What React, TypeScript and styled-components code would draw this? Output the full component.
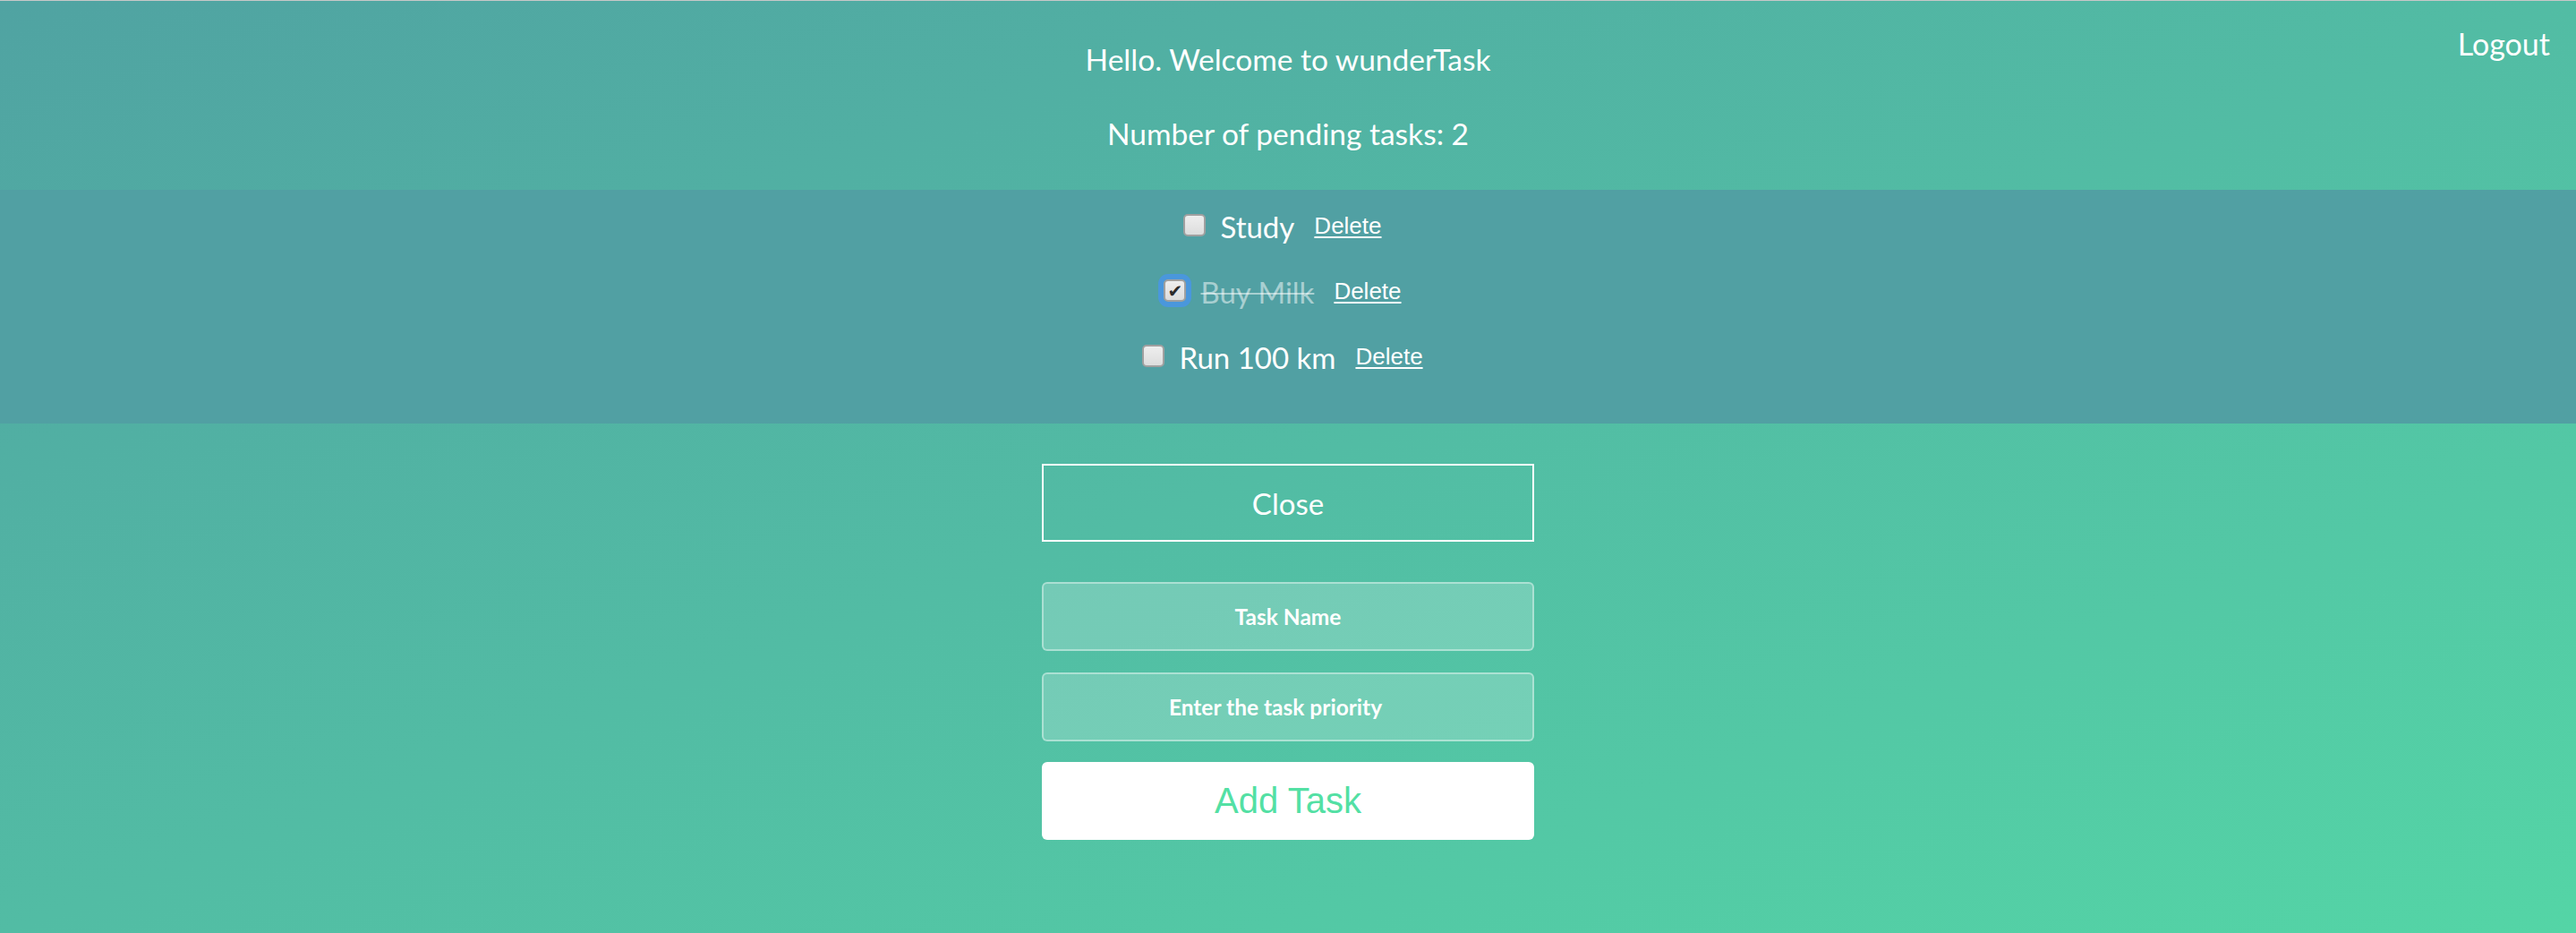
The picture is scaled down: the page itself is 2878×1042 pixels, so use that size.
import React, { useState } from "react";
import styled, { createGlobalStyle } from "styled-components";

const GlobalStyle = createGlobalStyle`
  html, body {
    margin: 0;
    padding: 0;
  }
  body {
    font-family: Lato, "Open Sans", sans-serif;
    background: #50a3a2;
  }
  * { box-sizing: border-box; }
`;

const Page = styled.div`
  min-height: 1042px;
  border-top: 1px solid #c8c8c8;
  background: linear-gradient(to bottom right, #50a3a2 0%, #54d5a6 100%);
  color: #fff;
`;

const Header = styled.header`
  display: grid;
  grid-template-columns: 1fr auto 1fr;
  padding-bottom: 43px;
`;

const Intro = styled.div`
  grid-column: 2;
  display: flex;
  flex-direction: column;
  align-items: center;
  gap: 43px;
  padding-top: 45px;
`;

const HeadLine = styled.h1`
  margin: 0;
  font-family: Lato, sans-serif;
  font-weight: 400;
  font-size: 33.5px;
  line-height: 40px;
  color: #fff;
`;

const LogoutLink = styled.a`
  grid-column: 3;
  justify-self: end;
  margin: 28px 29px 0 0;
  font-family: Lato, sans-serif;
  font-size: 34px;
  line-height: 40px;
  height: 40px;
  color: #fff;
  text-decoration: none;
  cursor: pointer;
`;

const TaskBand = styled.ul`
  margin: 0;
  list-style: none;
  background: #51a0a3;
  padding: 4px 0 38px;
  display: flex;
  flex-direction: column;
`;

const TaskRow = styled.li`
  height: 73px;
  display: flex;
  align-items: center;
  justify-content: center;
  padding-right: 12px;
`;

const Check = styled.input.attrs({ type: "checkbox" })<{ $focused?: boolean }>`
  appearance: none;
  -webkit-appearance: none;
  margin: -2px 16px 0 0;
  width: 25px;
  height: 25px;
  border: 2px solid #a0a0a0;
  border-radius: 5px;
  background: linear-gradient(#eeeeee, #dddddd);
  position: relative;
  flex: none;
  box-shadow: ${(p) => (p.$focused ? "0 0 0 6px #4a97dc" : "none")};
  &:checked::after {
    content: "✔";
    position: absolute;
    inset: 0;
    display: flex;
    align-items: center;
    justify-content: center;
    font-family: "DejaVu Sans", sans-serif;
    font-size: 20px;
    font-weight: 700;
    line-height: 1;
    color: #2b2b2b;
  }
`;

const TaskLabel = styled.span<{ $done?: boolean }>`
  font-family: Lato, sans-serif;
  font-size: 33px;
  line-height: 40px;
  color: ${(p) => (p.$done ? "rgba(255,255,255,0.5)" : "#fff")};
  text-decoration: ${(p) => (p.$done ? "line-through" : "none")};
  text-decoration-thickness: 2px;
  margin-right: 22px;
`;

const DeleteLink = styled.a`
  font-family: "Liberation Sans", Arial, sans-serif;
  font-size: 26px;
  color: #fff;
  text-decoration: underline;
  text-underline-offset: 3px;
  cursor: pointer;
`;

const FormColumn = styled.div`
  width: 550px;
  margin: 45px auto 0;
  display: flex;
  flex-direction: column;
`;

const CloseButton = styled.button`
  height: 87px;
  border: 2px solid #fff;
  background: transparent;
  color: #fff;
  font-family: Lato, sans-serif;
  font-size: 33px;
  cursor: pointer;
  margin-bottom: 45px;
`;

const TextField = styled.input<{ $spinner?: boolean }>`
  height: 77px;
  border: 2px solid rgba(255, 255, 255, 0.4);
  border-radius: 6px;
  background: rgba(255, 255, 255, 0.2);
  color: #fff;
  text-align: center;
  font-family: Lato, sans-serif;
  font-weight: 700;
  font-size: 24.5px;
  outline: none;
  margin-bottom: 24px;
  padding: 0 ${(p) => (p.$spinner ? "30px" : "2px")} 0 2px;
  &::placeholder {
    color: #fff;
    opacity: 1;
  }
`;

const AddButton = styled.button`
  height: 87px;
  border: none;
  border-radius: 6px;
  background: #fff;
  color: #53e0a4;
  font-family: "Liberation Sans", Arial, sans-serif;
  font-size: 40px;
  cursor: pointer;
  margin-top: -1px;
`;

type Task = { id: number; name: string; done: boolean; focused?: boolean };

export default function App() {
  const [tasks, setTasks] = useState<Task[]>([
    { id: 1, name: "Study", done: false },
    { id: 2, name: "Buy Milk", done: true, focused: true },
    { id: 3, name: "Run 100 km", done: false },
  ]);
  const pending = tasks.filter((t) => !t.done).length;

  return (
    <>
      <GlobalStyle />
      <Page>
        <Header>
          <Intro>
            <HeadLine>Hello. Welcome to wunderTask</HeadLine>
            <HeadLine as="h2">Number of pending tasks: {pending}</HeadLine>
          </Intro>
          <LogoutLink>Logout</LogoutLink>
        </Header>
        <TaskBand>
          {tasks.map((t) => (
            <TaskRow key={t.id}>
              <Check
                checked={t.done}
                $focused={t.focused}
                onChange={() =>
                  setTasks((ts) =>
                    ts.map((x) => (x.id === t.id ? { ...x, done: !x.done } : x))
                  )
                }
              />
              <TaskLabel $done={t.done}>{t.name}</TaskLabel>
              <DeleteLink>Delete</DeleteLink>
            </TaskRow>
          ))}
        </TaskBand>
        <FormColumn>
          <CloseButton>Close</CloseButton>
          <TextField placeholder="Task Name" />
          <TextField placeholder="Enter the task priority" $spinner />
          <AddButton>Add Task</AddButton>
        </FormColumn>
      </Page>
    </>
  );
}
